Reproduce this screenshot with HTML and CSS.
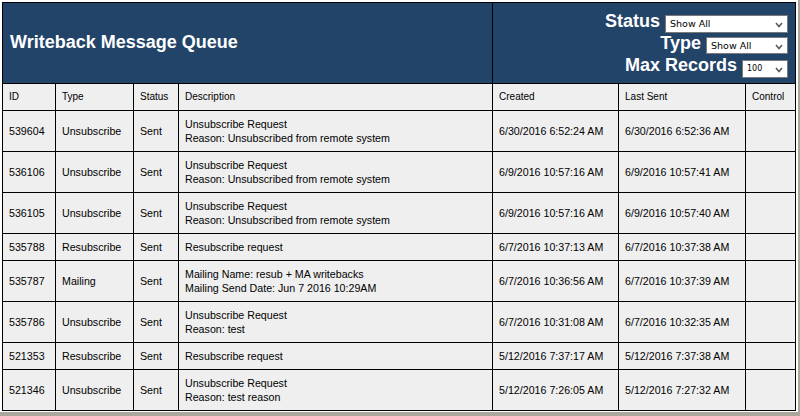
FILE: index.html
```html
<!DOCTYPE html>
<html>
<head>
    <title>Writeback Message Queue</title>
    <meta charset="UTF-8">
    <link rel="stylesheet" href="styles.css">
</head>
<body>
    <div class="frame">
        <table class="queue">
            <colgroup>
                <col class="col-id">
                <col class="col-type">
                <col class="col-status">
                <col class="col-desc">
                <col class="col-created">
                <col class="col-sent">
                <col class="col-control">
            </colgroup>
            <tr class="title-row">
                <td colspan="4" class="title-cell">Writeback Message Queue</td>
                <td colspan="3" class="filter-cell">
                    <div class="filters">
                        <div class="filter-row">
                            <label for="statusFilter">Status</label>
                            <span class="select-box">
                                <select id="statusFilter" class="sel-status">
                                    <option>Show All</option>
                                    <option>Sent</option>
                                    <option>Pending</option>
                                    <option>Failed</option>
                                </select>
                                <svg class="chevron" width="8" height="6" viewBox="0 0 8 6"><polyline points="1,1 4,4.5 7,1" fill="none" stroke="#555" stroke-width="1.5"/></svg>
                            </span>
                        </div>
                        <div class="filter-row">
                            <label for="typeFilter">Type</label>
                            <span class="select-box">
                                <select id="typeFilter" class="sel-type">
                                    <option>Show All</option>
                                    <option>Unsubscribe</option>
                                    <option>Resubscribe</option>
                                    <option>Mailing</option>
                                </select>
                                <svg class="chevron" width="8" height="6" viewBox="0 0 8 6"><polyline points="1,1 4,4.5 7,1" fill="none" stroke="#555" stroke-width="1.5"/></svg>
                            </span>
                        </div>
                        <div class="filter-row">
                            <label for="maxFilter">Max Records</label>
                            <span class="select-box">
                                <select id="maxFilter" class="sel-max">
                                    <option>100</option>
                                    <option>250</option>
                                    <option>500</option>
                                </select>
                                <svg class="chevron" width="8" height="6" viewBox="0 0 8 6"><polyline points="1,1 4,4.5 7,1" fill="none" stroke="#555" stroke-width="1.5"/></svg>
                            </span>
                        </div>
                    </div>
                </td>
            </tr>
            <tr class="head-row">
                <th>ID</th>
                <th>Type</th>
                <th>Status</th>
                <th>Description</th>
                <th>Created</th>
                <th>Last Sent</th>
                <th>Control</th>
            </tr>
            <tr>
                <td>539604</td>
                <td>Unsubscribe</td>
                <td>Sent</td>
                <td>Unsubscribe Request<br>Reason: Unsubscribed from remote system</td>
                <td>6/30/2016 6:52:24 AM</td>
                <td>6/30/2016 6:52:36 AM</td>
                <td></td>
            </tr>
            <tr>
                <td>536106</td>
                <td>Unsubscribe</td>
                <td>Sent</td>
                <td>Unsubscribe Request<br>Reason: Unsubscribed from remote system</td>
                <td>6/9/2016 10:57:16 AM</td>
                <td>6/9/2016 10:57:41 AM</td>
                <td></td>
            </tr>
            <tr>
                <td>536105</td>
                <td>Unsubscribe</td>
                <td>Sent</td>
                <td>Unsubscribe Request<br>Reason: Unsubscribed from remote system</td>
                <td>6/9/2016 10:57:16 AM</td>
                <td>6/9/2016 10:57:40 AM</td>
                <td></td>
            </tr>
            <tr>
                <td>535788</td>
                <td>Resubscribe</td>
                <td>Sent</td>
                <td>Resubscribe request</td>
                <td>6/7/2016 10:37:13 AM</td>
                <td>6/7/2016 10:37:38 AM</td>
                <td></td>
            </tr>
            <tr>
                <td>535787</td>
                <td>Mailing</td>
                <td>Sent</td>
                <td>Mailing Name: resub + MA writebacks<br>Mailing Send Date: Jun 7 2016 10:29AM</td>
                <td>6/7/2016 10:36:56 AM</td>
                <td>6/7/2016 10:37:39 AM</td>
                <td></td>
            </tr>
            <tr>
                <td>535786</td>
                <td>Unsubscribe</td>
                <td>Sent</td>
                <td>Unsubscribe Request<br>Reason: test</td>
                <td>6/7/2016 10:31:08 AM</td>
                <td>6/7/2016 10:32:35 AM</td>
                <td></td>
            </tr>
            <tr>
                <td>521353</td>
                <td>Resubscribe</td>
                <td>Sent</td>
                <td>Resubscribe request</td>
                <td>5/12/2016 7:37:17 AM</td>
                <td>5/12/2016 7:37:38 AM</td>
                <td></td>
            </tr>
            <tr>
                <td>521346</td>
                <td>Unsubscribe</td>
                <td>Sent</td>
                <td>Unsubscribe Request<br>Reason: test reason</td>
                <td>5/12/2016 7:26:05 AM</td>
                <td>5/12/2016 7:27:32 AM</td>
                <td></td>
            </tr>
        </table>
    </div>
</body>
</html>
```

FILE: styles.css
```css
html {
    background-color: #aaa89c;
}
body {
    margin: 0;
    font-family: "Liberation Sans", Arial, sans-serif;
    color: #000;
}
.frame {
    width: 798px;
    height: 412px;
    box-sizing: border-box;
    padding: 2px 0 0 2px;
    background-color: #fff;
    overflow: hidden;
}
.queue {
    width: 794px;
    table-layout: fixed;
    border-collapse: collapse;
    border: 1px solid #000;
    background-color: #efefef;
}
.col-id { width: 53px; }
.col-type { width: 78px; }
.col-status { width: 45px; }
.col-desc { width: 314px; }
.col-created { width: 126px; }
.col-sent { width: 127px; }
.col-control { width: 50px; }

.queue td, .queue th {
    border: 1px solid #000;
    padding: 6px 6px;
    font-size: 8pt;
    line-height: 14px;
    text-align: left;
    vertical-align: middle;
    white-space: nowrap;
}
.queue th {
    font-size: 10px;
    font-weight: normal;
}
.title-row td {
    background-color: #234469;
    color: #fff;
    height: 79px;
    padding-top: 0;
    padding-bottom: 0;
}
.title-cell {
    font-size: 18px !important;
    font-weight: bold;
    line-height: normal !important;
    padding-left: 7px !important;
    padding-bottom: 1px !important;
}
.filter-cell {
    vertical-align: top !important;
    padding-right: 7px !important;
}
.filters {
    padding-top: 8px;
}
.filter-row {
    display: flex;
    justify-content: flex-end;
    align-items: baseline;
    gap: 5px;
    height: 22px;
}
.filter-row label {
    font-size: 18px;
    font-weight: bold;
    line-height: 20px;
}
.select-box {
    position: relative;
    display: inline-block;
}
.select-box select {
    appearance: none;
    -webkit-appearance: none;
    display: block;
    box-sizing: border-box;
    height: 18px;
    margin: 0;
    padding: 0 16px 0 4px;
    border: 1px solid #7a7a7a;
    border-radius: 0;
    background-color: #fff;
    color: #000;
    font-family: "DejaVu Sans", Tahoma, sans-serif;
    font-size: 9.5px;
}
.sel-status { width: 123px; }
.sel-type { width: 82px; height: 17px !important; }
.sel-max { width: 46px; font-size: 8px !important; }
.chevron {
    position: absolute;
    right: 5px;
    top: 7px;
}
```
